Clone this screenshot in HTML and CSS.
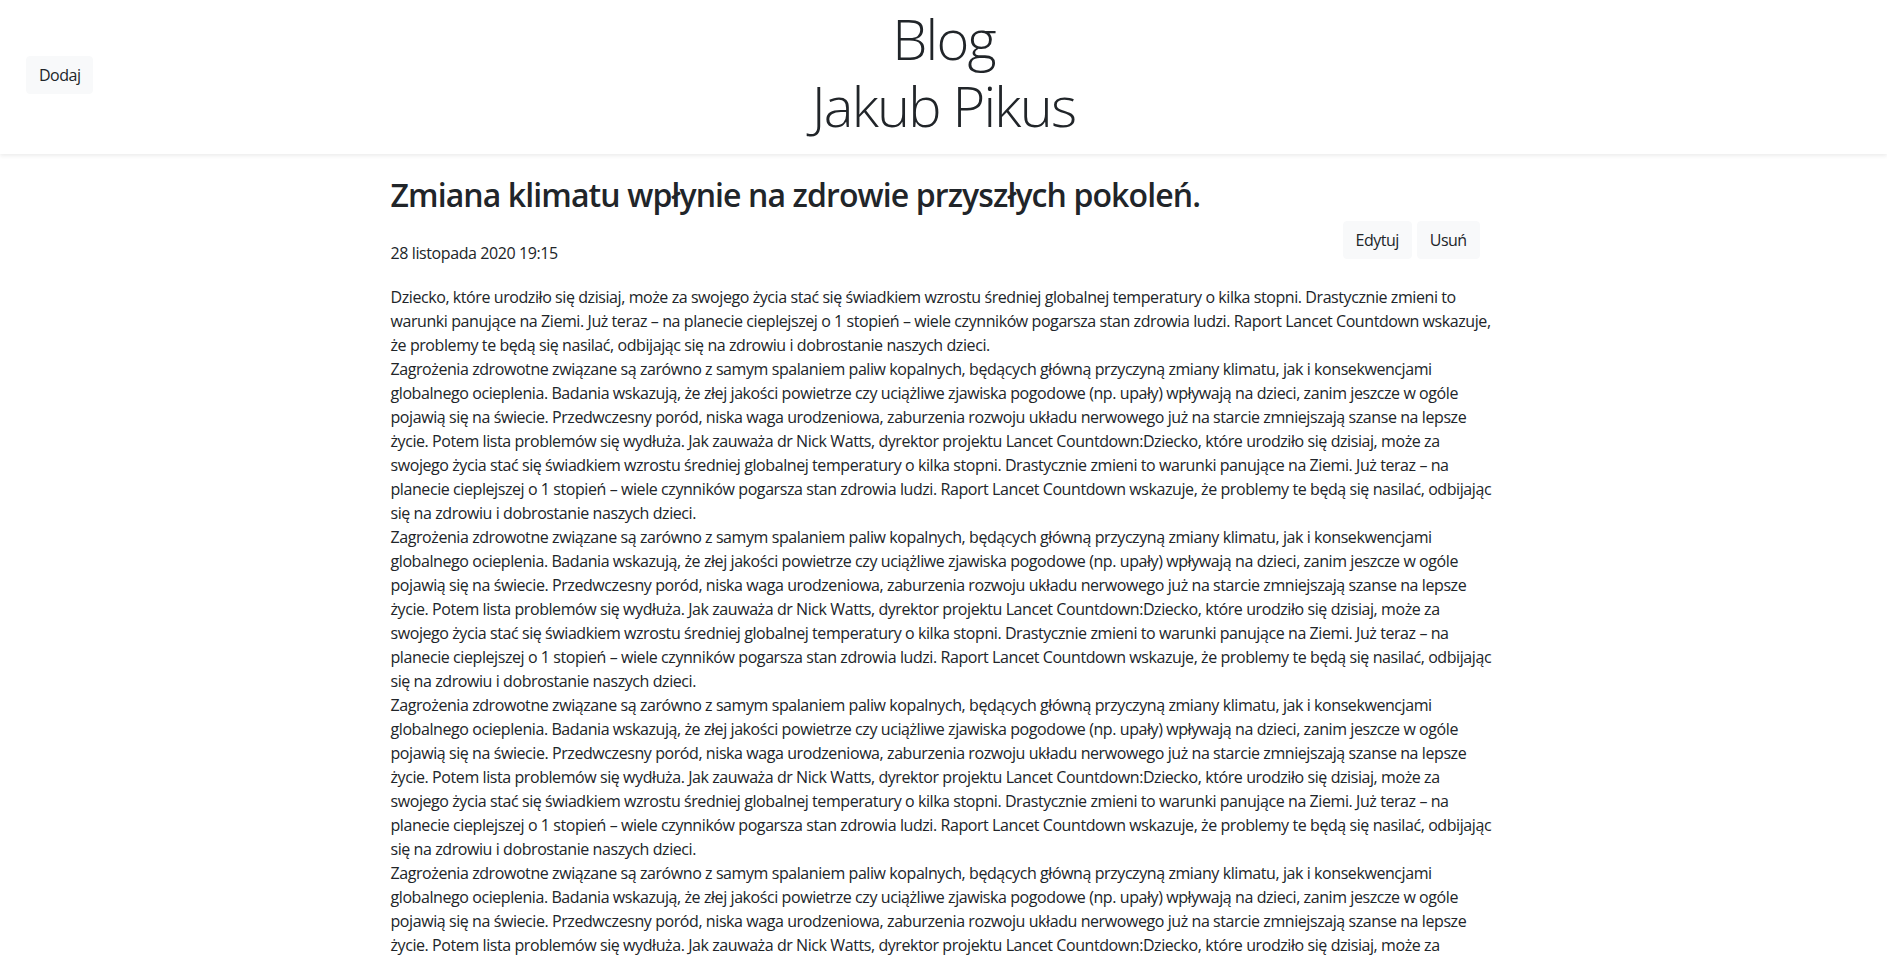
FILE: index.html
```html
<!DOCTYPE html>
<html lang="pl">
<head>
<meta charset="utf-8">
<title>Blog Jakub Pikus</title>
<link rel="stylesheet" href="styles.css">
</head>
<body>
<header class="site-header">
  <div class="header-side">
    <button class="btn">Dodaj</button>
  </div>
  <h1 class="site-title">Blog<br>Jakub Pikus</h1>
  <div class="header-side"></div>
</header>
<main class="container">
  <h2 class="post-title">Zmiana klimatu wpłynie na zdrowie przyszłych pokoleń.</h2>
  <div class="post-meta">
    <p class="post-date">28 listopada 2020 19:15</p>
    <div class="post-actions">
      <button class="btn">Edytuj</button>
      <button class="btn">Usuń</button>
    </div>
  </div>
  <p class="post-body">Dziecko, które urodziło się dzisiaj, może za swojego życia stać się świadkiem wzrostu średniej globalnej temperatury o kilka stopni. Drastycznie zmieni to warunki panujące na Ziemi. Już teraz – na planecie cieplejszej o 1 stopień – wiele czynników pogarsza stan zdrowia ludzi. Raport Lancet Countdown wskazuje, że problemy te będą się nasilać, odbijając się na zdrowiu i dobrostanie naszych dzieci.<br>Zagrożenia zdrowotne związane są zarówno z samym spalaniem paliw kopalnych, będących główną przyczyną zmiany klimatu, jak i konsekwencjami globalnego ocieplenia. Badania wskazują, że złej jakości powietrze czy uciążliwe zjawiska pogodowe (np. upały) wpływają na dzieci, zanim jeszcze w ogóle pojawią się na świecie. Przedwczesny poród, niska waga urodzeniowa, zaburzenia rozwoju układu nerwowego już na starcie zmniejszają szanse na lepsze życie. Potem lista problemów się wydłuża. Jak zauważa dr Nick Watts, dyrektor projektu Lancet Countdown:Dziecko, które urodziło się dzisiaj, może za swojego życia stać się świadkiem wzrostu średniej globalnej temperatury o kilka stopni. Drastycznie zmieni to warunki panujące na Ziemi. Już teraz – na planecie cieplejszej o 1 stopień – wiele czynników pogarsza stan zdrowia ludzi. Raport Lancet Countdown wskazuje, że problemy te będą się nasilać, odbijając się na zdrowiu i dobrostanie naszych dzieci.<br>Zagrożenia zdrowotne związane są zarówno z samym spalaniem paliw kopalnych, będących główną przyczyną zmiany klimatu, jak i konsekwencjami globalnego ocieplenia. Badania wskazują, że złej jakości powietrze czy uciążliwe zjawiska pogodowe (np. upały) wpływają na dzieci, zanim jeszcze w ogóle pojawią się na świecie. Przedwczesny poród, niska waga urodzeniowa, zaburzenia rozwoju układu nerwowego już na starcie zmniejszają szanse na lepsze życie. Potem lista problemów się wydłuża. Jak zauważa dr Nick Watts, dyrektor projektu Lancet Countdown:Dziecko, które urodziło się dzisiaj, może za swojego życia stać się świadkiem wzrostu średniej globalnej temperatury o kilka stopni. Drastycznie zmieni to warunki panujące na Ziemi. Już teraz – na planecie cieplejszej o 1 stopień – wiele czynników pogarsza stan zdrowia ludzi. Raport Lancet Countdown wskazuje, że problemy te będą się nasilać, odbijając się na zdrowiu i dobrostanie naszych dzieci.<br>Zagrożenia zdrowotne związane są zarówno z samym spalaniem paliw kopalnych, będących główną przyczyną zmiany klimatu, jak i konsekwencjami globalnego ocieplenia. Badania wskazują, że złej jakości powietrze czy uciążliwe zjawiska pogodowe (np. upały) wpływają na dzieci, zanim jeszcze w ogóle pojawią się na świecie. Przedwczesny poród, niska waga urodzeniowa, zaburzenia rozwoju układu nerwowego już na starcie zmniejszają szanse na lepsze życie. Potem lista problemów się wydłuża. Jak zauważa dr Nick Watts, dyrektor projektu Lancet Countdown:Dziecko, które urodziło się dzisiaj, może za swojego życia stać się świadkiem wzrostu średniej globalnej temperatury o kilka stopni. Drastycznie zmieni to warunki panujące na Ziemi. Już teraz – na planecie cieplejszej o 1 stopień – wiele czynników pogarsza stan zdrowia ludzi. Raport Lancet Countdown wskazuje, że problemy te będą się nasilać, odbijając się na zdrowiu i dobrostanie naszych dzieci.<br>Zagrożenia zdrowotne związane są zarówno z samym spalaniem paliw kopalnych, będących główną przyczyną zmiany klimatu, jak i konsekwencjami globalnego ocieplenia. Badania wskazują, że złej jakości powietrze czy uciążliwe zjawiska pogodowe (np. upały) wpływają na dzieci, zanim jeszcze w ogóle pojawią się na świecie. Przedwczesny poród, niska waga urodzeniowa, zaburzenia rozwoju układu nerwowego już na starcie zmniejszają szanse na lepsze życie. Potem lista problemów się wydłuża. Jak zauważa dr Nick Watts, dyrektor projektu Lancet Countdown:Dziecko, które urodziło się dzisiaj, może za swojego życia stać się świadkiem wzrostu średniej globalnej temperatury o kilka stopni. Drastycznie zmieni to warunki panujące na Ziemi. Już teraz – na planecie cieplejszej o 1 stopień – wiele czynników pogarsza stan zdrowia ludzi. Raport Lancet Countdown wskazuje, że problemy te będą się nasilać, odbijając się na zdrowiu i dobrostanie naszych dzieci.</p>
</main>
</body>
</html>
```

FILE: styles.css
```css
* { box-sizing: border-box; }

body {
  margin: 0;
  font-family: "Open Sans", "Noto Sans", sans-serif;
  font-size: 16px;
  line-height: 1.5;
  color: #212529;
  background: #fff;
}

.btn {
  font-family: inherit;
  font-size: 16px;
  line-height: 24px;
  letter-spacing: -0.5px;
  color: #212529;
  background: #f8f9fa;
  border: 1px solid #f8f9fa;
  border-radius: 4px;
  padding: 6px 12px;
  cursor: pointer;
}

.site-header {
  display: grid;
  grid-template-columns: 1fr auto 1fr;
  align-items: center;
  height: 154px;
  background: #fff;
  box-shadow: 0 2px 4px rgba(0, 0, 0, 0.075);
}

.header-side {
  padding-left: 26px;
  padding-bottom: 4px;
}

.site-title {
  margin: 0;
  padding: 5px 0 15px;
  font-size: 56px;
  font-weight: 300;
  line-height: 67px;
  letter-spacing: -1.8px;
  text-align: center;
  align-self: start;
}

.container {
  width: 1140px;
  margin: 0 auto;
  padding: 0 13px 0 17px;
}

.post-title {
  margin: 22px 0 7px;
  font-size: 32px;
  font-weight: 600;
  line-height: 1.2;
  letter-spacing: -0.9px;
}

.post-meta {
  display: grid;
  grid-template-columns: 10fr 2fr;
  column-gap: 30px;
}

.post-date {
  margin: 20px 0 20px;
  letter-spacing: -0.4px;
}

.post-actions {
  display: flex;
  gap: 5px;
  align-items: flex-start;
  padding-left: 22px;
}

.post-body {
  margin: 0;
  letter-spacing: -0.42px;
}
```
